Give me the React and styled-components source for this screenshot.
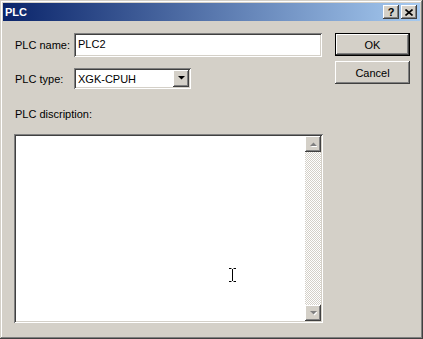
import React from 'react';
import styled, { createGlobalStyle } from 'styled-components';

const GlobalStyle = createGlobalStyle`
  html, body {
    margin: 0;
    padding: 0;
    background: #d4d0c8;
  }
  * {
    box-sizing: border-box;
  }
`;

const face = '#d4d0c8';

const Window = styled.div`
  position: relative;
  width: 423px;
  height: 339px;
  padding: 3px;
  background: ${face};
  font-family: "Liberation Sans", Arial, sans-serif;
  font-size: 11px;
  color: #000;
  box-shadow: inset -1px -1px #404040, inset 1px 1px ${face},
    inset -2px -2px #808080, inset 2px 2px #fff;
  display: flex;
  flex-direction: column;
`;

const TitleBar = styled.div`
  height: 18px;
  display: flex;
  align-items: center;
  padding: 0 3px 0 2px;
  background: linear-gradient(to right, #0a246a, #a6caf0);
`;

const Title = styled.span`
  flex: 1;
  color: #fff;
  font-weight: bold;
  font-size: 11px;
  line-height: 18px;
  margin-top: -1px;
`;

const CaptionButtons = styled.div`
  display: flex;
  gap: 2px;
`;

const raised = `
  box-shadow: inset -1px -1px #404040, inset 1px 1px #fff,
    inset -2px -2px #808080, inset 2px 2px ${face};
`;

const CaptionButton = styled.div`
  width: 16px;
  height: 14px;
  background: ${face};
  ${raised}
  display: flex;
  align-items: center;
  justify-content: center;
  font-weight: bold;
  font-size: 11px;
  line-height: 14px;
`;

const Body = styled.div`
  flex: 1;
  display: flex;
  gap: 12px;
  padding: 12px 10px 0 11px;
`;

const Left = styled.div`
  width: 309px;
  display: flex;
  flex-direction: column;
`;

const Row = styled.div`
  display: flex;
  align-items: center;
  margin-top: ${p => p.$top || 0}px;
`;

const Label = styled.span`
  width: 60px;
  padding-left: 1px;
`;

const sunken = `
  background: #fff;
  box-shadow: inset 1px 1px #808080, inset -1px -1px #fff,
    inset 2px 2px #404040, inset -2px -2px ${face};
`;

const Edit = styled.div`
  width: 248px;
  height: 24px;
  ${sunken}
  padding: 3px 4px;
  line-height: 16px;
`;

const Combo = styled.div`
  width: 117px;
  height: 21px;
  ${sunken}
  display: flex;
  align-items: center;
  padding: 2px;
`;

const ComboText = styled.span`
  flex: 1;
  padding-left: 2px;
`;

const ArrowButton = styled.div`
  width: ${p => p.$w || 16}px;
  height: ${p => p.$h || 17}px;
  background: ${face};
  ${raised}
  display: flex;
  align-items: center;
  justify-content: center;
`;

const DescLabel = styled.div`
  margin-top: 19px;
  padding-left: 1px;
  line-height: 12px;
`;

const TextArea = styled.div`
  margin-top: 14px;
  height: 189px;
  ${sunken}
  padding: 2px;
  display: flex;
  justify-content: flex-end;
`;

const ScrollBar = styled.div`
  width: 16px;
  display: flex;
  flex-direction: column;
  justify-content: space-between;
  background: repeating-conic-gradient(${face} 0 25%, #fff 0 50%) 0 0 / 2px 2px;
`;

const Buttons = styled.div`
  display: flex;
  flex-direction: column;
  gap: 5px;
`;

const Button = styled.div`
  width: 75px;
  height: 23px;
  background: ${face};
  display: flex;
  align-items: center;
  justify-content: center;
  padding-top: 1px;
  box-shadow: ${p =>
    p.$default
      ? `inset 0 0 0 1px #000, inset -2px -2px #404040, inset 2px 2px #fff, inset -3px -3px #808080`
      : `inset -1px -1px #404040, inset 1px 1px #fff, inset -2px -2px #808080, inset 2px 2px ${face}`};
`;

const Cursor = styled.svg`
  position: absolute;
  left: 228px;
  top: 267px;
`;

const Triangle = ({ down, disabled }) => (
  <svg width="7" height="5" viewBox="0 0 7 5">
    {disabled && (
      <path d={down ? 'M1 1h7L4.5 4.5z' : 'M1 5h7L4.5 1.5z'} fill="#fff" />
    )}
    <path d={down ? 'M0 0h7L3.5 3.5 z' : 'M0 4h7L3.5 0.5z'} fill={disabled ? '#808080' : '#000'} />
  </svg>
);

export default function App() {
  return (
    <>
      <GlobalStyle />
      <Window>
        <TitleBar>
          <Title>PLC</Title>
          <CaptionButtons>
            <CaptionButton>?</CaptionButton>
            <CaptionButton>
              <svg width="8" height="7" viewBox="0 0 8 7">
                <path d="M0.5 0.5l7 6M7.5 0.5l-7 6" stroke="#000" strokeWidth="1.6" />
              </svg>
            </CaptionButton>
          </CaptionButtons>
        </TitleBar>
        <Body>
          <Left>
            <Row>
              <Label>PLC name:</Label>
              <Edit>PLC2</Edit>
            </Row>
            <Row $top={11}>
              <Label>PLC type:</Label>
              <Combo>
                <ComboText>XGK-CPUH</ComboText>
                <ArrowButton>
                  <Triangle down />
                </ArrowButton>
              </Combo>
            </Row>
            <DescLabel>PLC discription:</DescLabel>
            <TextArea>
              <ScrollBar>
                <ArrowButton $h={16}>
                  <Triangle disabled />
                </ArrowButton>
                <ArrowButton $h={16}>
                  <Triangle down disabled />
                </ArrowButton>
              </ScrollBar>
            </TextArea>
          </Left>
          <Buttons>
            <Button $default>OK</Button>
            <Button>Cancel</Button>
          </Buttons>
        </Body>
        <Cursor width="9" height="16" viewBox="0 0 9 16">
          <path d="M1 1.5h2.5M5.5 1.5H8M4.5 2v12M1 14.5h2.5M5.5 14.5H8" stroke="#000" strokeWidth="1" fill="none" />
        </Cursor>
      </Window>
    </>
  );
}
